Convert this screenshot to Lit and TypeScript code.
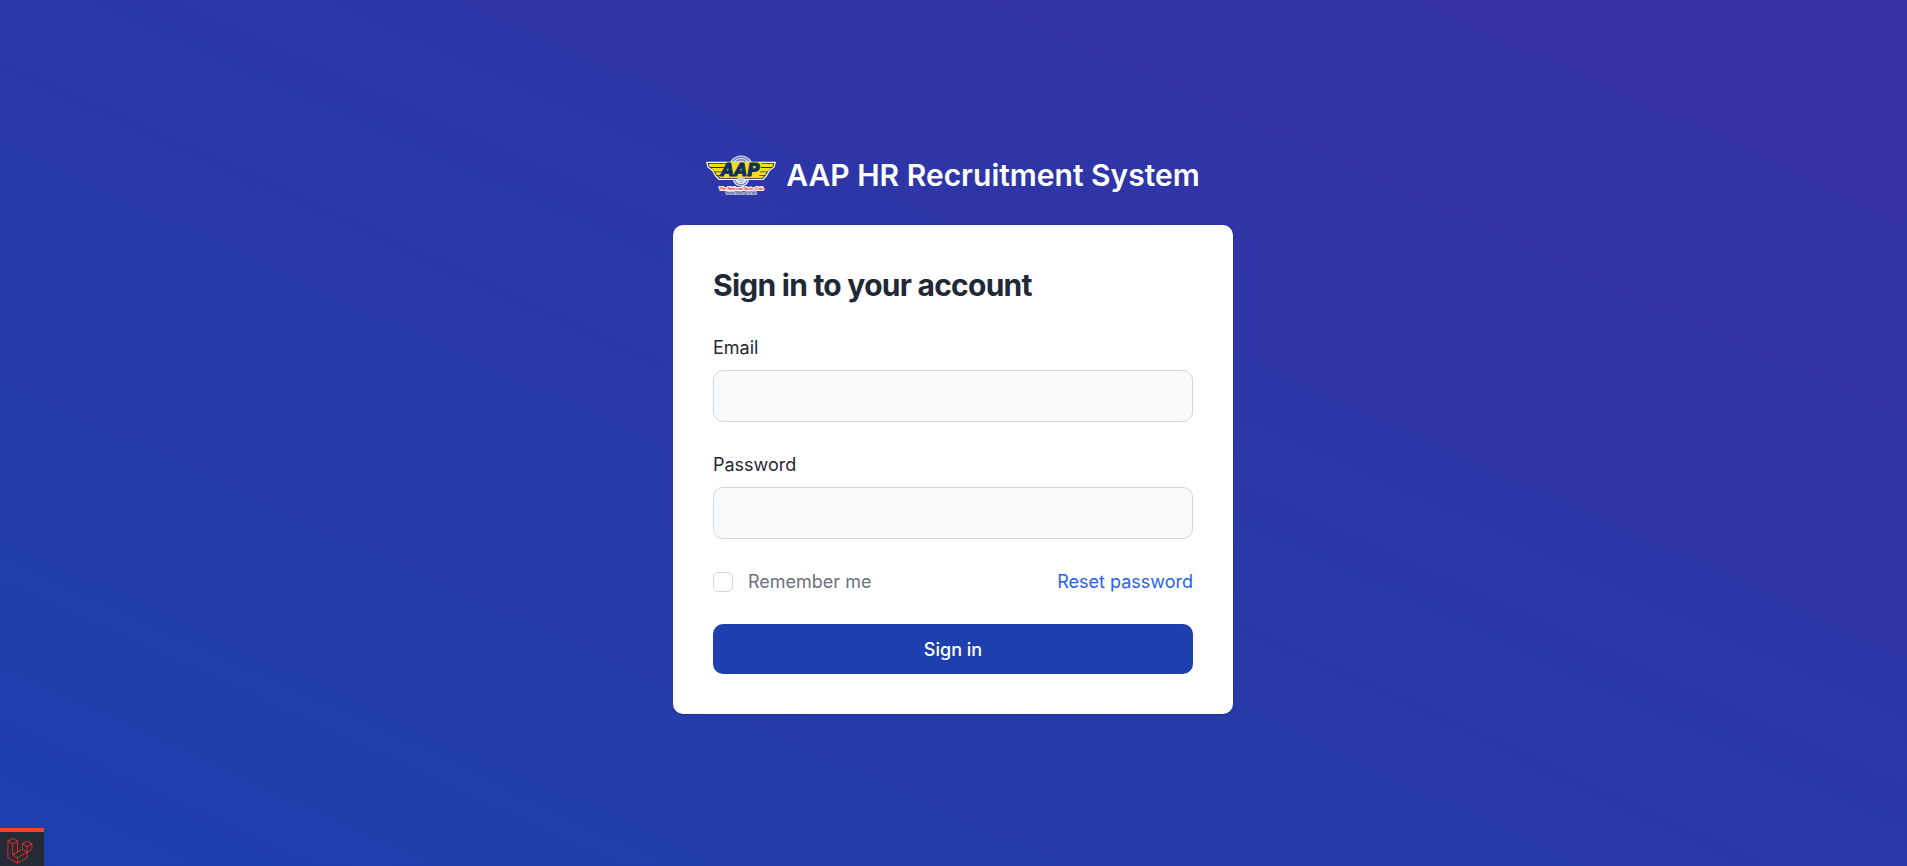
import { LitElement, html, css } from "lit";
import { customElement } from "lit/decorators.js";

@customElement("club-logo")
class ClubLogo extends LitElement {
  static styles = css`
    :host { display: block; flex: none; }
    svg { display: block; width: 70px; height: 40px; }
    .name { font: italic bold 17px "DejaVu Sans", Verdana, sans-serif; fill: #0b2f63; stroke: #0b2f63; stroke-width: 1; }
    .tag { font: bold 4px "Liberation Sans", Arial, sans-serif; fill: #ee2430; stroke: #fff; stroke-width: 2; paint-order: stroke; }
    .site { font: bold 4px "Liberation Sans", Arial, sans-serif; fill: #16386e; stroke: #fff; stroke-width: 1; paint-order: stroke; }
  `;
  render() {
    return html`
      <svg viewBox="0 0 70 40" role="img" aria-label="AAP">
        <g fill="#16386e" stroke="#e9eef8" stroke-width="1.2">
          <circle cx="35" cy="12.5" r="11.5" fill="#6c82b4" />
          <circle cx="35" cy="12.5" r="9" fill="#6c82b4" />
          <circle cx="35" cy="12.5" r="6.5" />
          <circle cx="35" cy="23.5" r="7.5" fill="#6c82b4" />
          <circle cx="35" cy="23.5" r="5" fill="#a9b8d6" />
          <circle cx="35" cy="25.5" r="3" fill="#8195c0" />
        </g>
        <path d="M0.7 7.3H69.3L68 12L63 16L61 20L57 24.5H13L9 20L7 16L2 12Z" fill="#0b2f63" stroke="#fff" stroke-width="1.2" stroke-linejoin="round" />
        <path d="M2.5 8.8H67.5L66.2 12H3.8ZM5 13H65L61.5 16.5H8.5ZM9.2 17.3H60.8L59.3 20H10.7ZM11.8 20.8H58.2L56 23.2H14Z" fill="#ffdc19" />
        <path d="M21 7.3H56L53 21.5H15L14 19Z" fill="#ffdc19" />
        <text class="name" x="15" y="21">AAP</text>
        <path d="M31 23.7L33 22H37L39 23.7L37 27H33Z" fill="#c3cde2" />
        <text class="tag" x="35.5" y="34.5" text-anchor="middle">The National Auto Club</text>
        <text class="site" x="35" y="38.5" text-anchor="middle">www.aap.org.ph</text>
      </svg>
    `;
  }
}

@customElement("debug-toggle")
class DebugToggle extends LitElement {
  static styles = css`
    :host { position: fixed; left: 0; bottom: 0; }
    button {
      display: block; margin: 0; padding: 6px 11px 2px 7px; border: 0;
      border-top: 4px solid #f4432f; background: #252a37; cursor: pointer;
    }
    svg { display: block; width: 26px; height: 26px; fill: #ff2d20; }
  `;
  render() {
    return html`
      <button type="button" aria-label="Open debug bar">
        <svg viewBox="0 0 50 52" aria-hidden="true">
          <path d="M49.626 11.564a.809.809 0 0 1 .028.209v10.972a.8.8 0 0 1-.402.694l-9.209 5.302V39.25c0 .286-.152.55-.4.694L20.42 51.01c-.044.025-.092.041-.14.058-.018.006-.035.017-.054.022a.805.805 0 0 1-.41 0c-.022-.006-.042-.018-.063-.026-.044-.016-.09-.03-.132-.054L.402 39.944A.801.801 0 0 1 0 39.25V6.334c0-.072.01-.142.028-.21.006-.023.02-.044.028-.067.015-.042.029-.085.051-.124.015-.026.037-.047.055-.071.023-.032.044-.065.071-.093.023-.023.053-.04.079-.06.029-.024.055-.05.088-.069h.001l9.61-5.533a.802.802 0 0 1 .8 0l9.61 5.533h.002c.032.02.059.045.088.068.026.02.055.038.078.06.028.029.048.062.072.094.017.024.04.045.054.071.023.04.036.082.052.124.008.023.022.044.028.068a.809.809 0 0 1 .028.209v20.559l8.008-4.611v-10.51c0-.07.01-.141.028-.208.007-.024.02-.045.028-.068.016-.042.03-.085.052-.124.015-.026.037-.047.054-.071.024-.032.044-.065.072-.093.023-.023.052-.04.078-.06.03-.024.056-.05.088-.069h.001l9.611-5.533a.801.801 0 0 1 .8 0l9.61 5.533c.034.02.06.045.09.068.025.02.054.038.077.06.028.029.048.062.072.094.018.024.04.045.054.071.023.039.036.082.052.124.009.023.022.044.028.068zm-1.574 10.718v-9.124l-3.363 1.936-4.646 2.675v9.124l8.01-4.611zm-9.61 16.505v-9.13l-4.57 2.61-13.05 7.448v9.216l17.62-10.144zM1.602 7.719v31.068L19.22 48.93v-9.214l-9.204-5.209-.003-.002-.004-.002c-.031-.018-.057-.044-.086-.066-.025-.02-.054-.036-.076-.058l-.002-.003c-.026-.025-.044-.056-.066-.084-.02-.027-.044-.05-.06-.078l-.001-.003c-.018-.03-.029-.066-.042-.1-.013-.03-.03-.058-.038-.09v-.001c-.01-.038-.012-.078-.016-.117-.004-.03-.012-.06-.012-.09v-.002-21.481L4.965 9.654 1.602 7.72zm8.81-5.994L2.405 6.334l8.005 4.609 8.006-4.61-8.006-4.608zm4.164 28.764l4.645-2.674V7.719l-3.363 1.936-4.646 2.675v20.096l3.364-1.937zM39.243 7.164l-8.006 4.609 8.006 4.609 8.005-4.61-8.005-4.608zm-.801 10.605l-4.646-2.675-3.363-1.936v9.124l4.645 2.674 3.364 1.937v-9.124zM20.02 38.33l11.743-6.704 5.87-3.35-8-4.606-9.211 5.303-8.395 4.833 7.993 4.524z" />
        </svg>
      </button>
    `;
  }
}

@customElement("app-root")
class AppRoot extends LitElement {
  static styles = css`
    :host { display: block; font-family: Inter, "Liberation Sans", sans-serif; font-size: 18px; line-height: 25px; color: #1f2937; }
    * { box-sizing: border-box; }
    .page {
      min-height: 100vh; display: flex; flex-direction: column; align-items: center; justify-content: center;
      padding: 3px 21px 0 20px; background: linear-gradient(to top right, #1e40af, #3730a3);
    }
    .brand { display: flex; align-items: center; gap: 10px; margin-bottom: 30px; font-size: 30px; line-height: 40px; font-weight: 600; color: #fff; text-decoration: none; }
    .card { width: 100%; max-width: 560px; padding: 40px; border-radius: 10px; background: #fff; box-shadow: 0 1px 3px rgba(0, 0, 0, 0.1), 0 1px 2px rgba(0, 0, 0, 0.06); }
    form { display: grid; gap: 30px; }
    h1 { margin: 0 0 30px; font-size: 30px; line-height: 40px; font-weight: 700; letter-spacing: -0.025em; }
    .field { display: grid; gap: 10px; }
    .input { width: 100%; height: 52px; padding: 0 12px; border: 1px solid #d1d5db; border-radius: 10px; background: #f9fafb; font: inherit; color: inherit; }
    .row { display: flex; align-items: center; justify-content: space-between; }
    .remember { display: flex; align-items: center; gap: 15px; color: #6b7280; }
    .check { appearance: none; width: 20px; height: 20px; margin: 0; border: 1px solid #d1d5db; border-radius: 5px; background: #fff; }
    .check:checked { background: #2563eb; }
    .link { color: #2563eb; text-decoration: none; }
    .submit { height: 50px; border: 0; border-radius: 10px; background: #1e40af; color: #fff; font: inherit; font-weight: 500; cursor: pointer; }
  `;
  render() {
    return html`
      <main class="page">
        <a class="brand" href="#"><club-logo></club-logo>AAP HR Recruitment System</a>
        <section class="card">
          <h1>Sign in to your account</h1>
          <form>
            <div class="field">
              <label for="email">Email</label>
              <input class="input" id="email" type="email" />
            </div>
            <div class="field">
              <label for="password">Password</label>
              <input class="input" id="password" type="password" />
            </div>
            <div class="row">
              <label class="remember" for="remember"><input class="check" id="remember" type="checkbox" />Remember me</label>
              <a class="link" href="#">Reset password</a>
            </div>
            <button class="submit" type="submit">Sign in</button>
          </form>
        </section>
      </main>
      <debug-toggle></debug-toggle>
    `;
  }
}
